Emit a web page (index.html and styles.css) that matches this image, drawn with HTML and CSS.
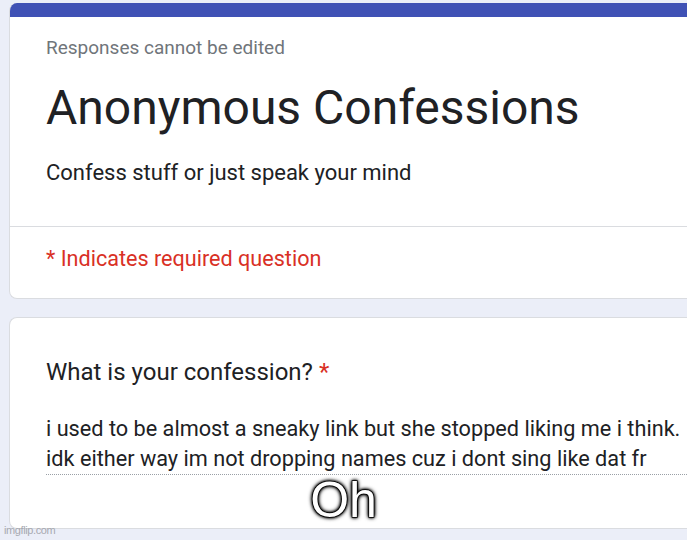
FILE: index.html
```html
<!DOCTYPE html>
<html>
<head>
<meta charset="utf-8">
<link rel="stylesheet" href="styles.css">
</head>
<body>
<div class="page">
  <div class="card header-card">
    <div class="accent"></div>
    <div class="header-body">
      <div class="note">Responses cannot be edited</div>
      <h1 class="title">Anonymous Confessions</h1>
      <div class="desc">Confess stuff or just speak your mind</div>
    </div>
    <div class="required-row">
      <span class="required">* Indicates required question</span>
    </div>
  </div>
  <div class="card question-card">
    <div class="question">What is your confession? <span class="star">*</span></div>
    <div class="answer">i used to be almost a sneaky link but she stopped liking me i think. idk either way im not dropping names cuz i dont sing like dat fr</div>
  </div>
</div>
<div class="caption">Oh</div>
<div class="watermark">imgflip.com</div>
</body>
</html>
```
FILE: styles.css
```css
html, body {
  margin: 0;
  padding: 0;
}
body {
  background: #ebeef8;
  width: 687px;
  height: 540px;
  overflow: hidden;
  position: relative;
  font-family: Roboto, "Liberation Sans", sans-serif;
}
.page {
  padding: 3px 0 0 9px;
  display: flex;
  flex-direction: column;
  gap: 18px;
}
.card {
  background: #fff;
  border: 1px solid #dadce0;
  border-right: none;
  border-radius: 8px 0 0 8px;
  width: 700px;
  box-sizing: border-box;
}
.header-card {
  height: 296px;
  display: flex;
  flex-direction: column;
  border-top: none;
  overflow: hidden;
}
.accent {
  height: 14px;
  flex: none;
  background: #3f51b5;
}
.header-body {
  padding: 19px 36px 0 36px;
  height: 210px;
  flex: none;
  box-sizing: border-box;
  border-bottom: 1px solid #dadce0;
}
.note {
  font-size: 19px;
  color: #70757a;
  line-height: 24px;
}
.title {
  margin: 20px 0 0 0;
  font-weight: 400;
  font-size: 48px;
  line-height: 56px;
  color: #202124;
}
.desc {
  margin-top: 23px;
  font-size: 22px;
  line-height: 28px;
  color: #202124;
}
.required-row {
  padding: 18px 36px 0 36px;
  font-size: 21.6px;
  line-height: 28px;
}
.required {
  color: #d93025;
}
.question-card {
  height: 212px;
  padding: 39px 36px 0 36px;
}
.question {
  font-size: 24px;
  color: #202124;
  line-height: 30px;
}
.star {
  color: #d93025;
}
.answer {
  margin-top: 27px;
  font-size: 21.7px;
  line-height: 30px;
  color: #202124;
  width: 641px;
  border-bottom: 1px dotted #9aa0a6;
}
.caption {
  position: absolute;
  left: 0;
  right: 0;
  top: 472px;
  text-align: center;
  font-family: "Liberation Sans", Arial, sans-serif;
  font-size: 50px;
  line-height: 56px;
  color: #fff;
  -webkit-text-stroke: 1.5px #000;
  paint-order: stroke fill;
  text-shadow: 0 0 3px #000, 0 0 3px #000, 0 0 4px #000, 0 0 5px #000;
}
.watermark {
  position: absolute;
  left: 4px;
  top: 524px;
  font-family: "Liberation Sans", Arial, sans-serif;
  font-size: 11px;
  color: #a7a9b0;
  letter-spacing: -0.4px;
}
```
